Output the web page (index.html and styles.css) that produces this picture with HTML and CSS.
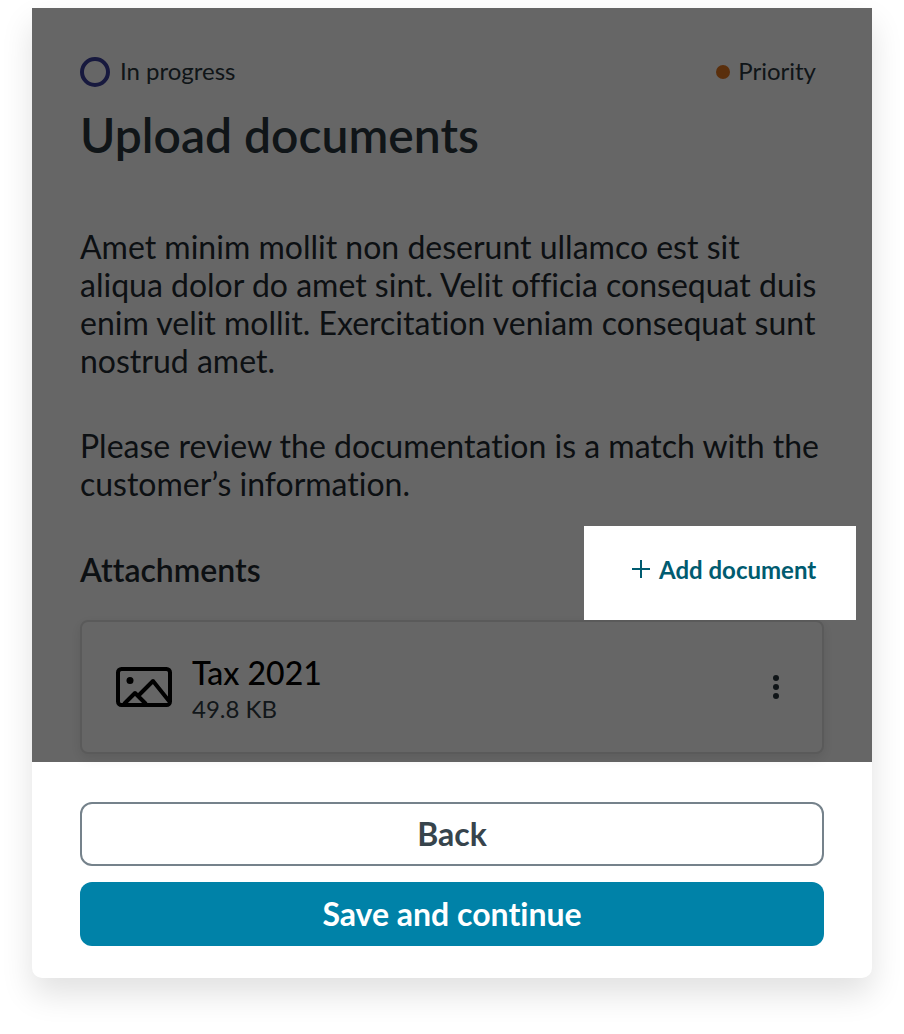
FILE: index.html
```html
<!DOCTYPE html>
<html lang="en">
<head>
<meta charset="utf-8">
<title>Upload documents</title>
<link rel="stylesheet" href="styles.css">
</head>
<body>
<main class="sheet">
  <div class="scrim"></div>
  <section class="content">
    <div class="meta">
      <div class="status"><span class="ring"></span><span class="label">In progress</span></div>
      <div class="priority"><span class="dot"></span><span class="label">Priority</span></div>
    </div>
    <h1 class="title">Upload documents</h1>
    <p class="copy copy-first">Amet minim mollit non deserunt ullamco est sit aliqua dolor do amet sint. Velit officia consequat duis enim velit mollit. Exercitation veniam consequat sunt nostrud amet.</p>
    <p class="copy copy-second">Please review the documentation is a match with the customer’s information.</p>
    <div class="attach-head">
      <h2 class="attach-title">Attachments</h2>
      <button class="add" type="button">
        <svg class="add-icon" viewBox="0 0 20 20" aria-hidden="true"><path d="M10 1v18M1 10h18"/></svg>
        <span>Add document</span>
      </button>
    </div>
    <article class="file">
      <svg class="file-icon" viewBox="0 0 56 40" aria-hidden="true">
        <rect class="ic" x="2" y="2" width="52" height="36" rx="3.500"/>
        <circle class="ic-fill" cx="14" cy="13.500" r="3.500"/>
        <path class="ic" d="M8 37l11-11 11 11M22 29l15-15 16 20"/>
      </svg>
      <div class="file-text">
        <div class="file-name">Tax 2021</div>
        <div class="file-size">49.8 KB</div>
      </div>
      <div class="kebab" aria-hidden="true"><i></i><i></i><i></i></div>
    </article>
  </section>
  <footer class="actions">
    <button class="btn btn-back" type="button">Back</button>
    <button class="btn btn-save" type="button">Save and continue</button>
  </footer>
</main>
</body>
</html>
```
FILE: styles.css
```css
* { box-sizing: border-box; }
html, body { margin: 0; background: #fff; }
body {
  width: 904px;
  height: 1034px;
  overflow: hidden;
  padding: 8px 32px 0;
  font-family: Lato, "Liberation Sans", sans-serif;
  font-variant-ligatures: none;
}
.sheet {
  position: relative;
  width: 840px;
  height: 970px;
  background: #fff;
  border-radius: 0 0 10px 10px;
  box-shadow: 0 16px 32px rgba(0, 0, 0, 0.12);
}
.scrim {
  position: absolute;
  inset: 0 0 216px 0;
  background: rgba(0, 0, 0, 0.6);
  z-index: 1;
}
.content { height: 746px; padding: 48px 48px 0; }
.meta {
  display: flex;
  justify-content: space-between;
  align-items: center;
  height: 32px;
  padding-right: 8px;
  font-size: 24px;
  color: #2a363d;
}
.label { padding-bottom: 4px; }
.status, .priority { display: flex; align-items: center; }
.ring {
  width: 30px;
  height: 30px;
  border: 4px solid #3b3f9c;
  border-radius: 50%;
  margin-right: 10px;
}
.dot {
  width: 14px;
  height: 14px;
  border-radius: 50%;
  background: #e2761f;
  margin-right: 8px;
}
.title {
  margin: 23px 0 0;
  font-size: 48px;
  line-height: 48px;
  font-weight: 600;
  color: #2a363d;
}
.copy {
  margin: 0;
  font-size: 32px;
  line-height: 38px;
  color: #1f2a30;
}
.copy-first { margin-top: 69px; }
.copy-second { margin-top: 47px; }
.attach-head {
  display: flex;
  justify-content: space-between;
  align-items: center;
  margin-top: 23px;
  height: 94px;
}
.attach-title {
  margin: 0 0 8px;
  font-size: 32px;
  font-weight: 600;
  color: #1f2a30;
}
.add {
  position: relative;
  z-index: 2;
  display: flex;
  align-items: center;
  height: 94px;
  width: 272px;
  margin-right: -32px;
  padding: 0 40px 8px 48px;
  border: 0;
  background: #fff;
  color: #005b70;
  font: 700 24px Lato, "Liberation Sans", sans-serif;
  font-variant-ligatures: none;
  white-space: nowrap;
}
.add-icon {
  width: 20px;
  height: 20px;
  margin-right: 8px;
  margin-left: -1px;
  flex: none;
  fill: none;
  stroke: #005b70;
  stroke-width: 2;
}
.file {
  display: flex;
  align-items: center;
  height: 134px;
  padding: 0 43px 0 34px;
  background: #fff;
  border: 2px solid #e0e0e0;
  border-radius: 8px;
  box-shadow: 0 4px 12px rgba(0, 0, 0, 0.1);
}
.file-icon { width: 56px; height: 40px; margin-right: 20px; flex: none; }
.ic { fill: none; stroke: #000; stroke-width: 4; stroke-linejoin: round; }
.ic-fill { fill: #000; }
.file-text { flex: 1; padding-top: 3px; }
.file-name { font-size: 32px; line-height: 38px; font-weight: 500; color: #000; }
.file-size { margin-top: 3px; font-size: 24px; line-height: 28px; color: #2f3b43; }
.kebab { display: flex; flex-direction: column; gap: 3px; }
.kebab i { display: block; width: 6px; height: 6px; border-radius: 50%; background: #2a363d; }
.actions {
  position: relative;
  padding: 48px 48px 0;
  display: flex;
  flex-direction: column;
  gap: 16px;
}
.btn {
  display: block;
  width: 100%;
  height: 64px;
  padding-bottom: 3px;
  border-radius: 12px;
  font: 700 32px Lato, "Liberation Sans", sans-serif;
  font-variant-ligatures: none;
}
.btn-back { background: #fff; border: 2px solid #75828b; color: #37444c; }
.btn-save { background: #0082a8; border: 0; color: #fff; }
```
